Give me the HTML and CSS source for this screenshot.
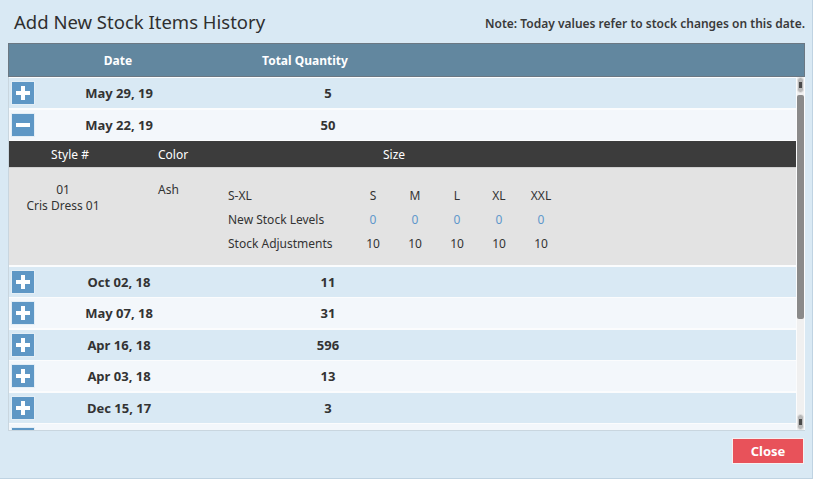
FILE: index.html
```html
<!DOCTYPE html>
<html lang="en">
<head>
  <meta charset="UTF-8">
  <title>Add New Stock Items History</title>
  <link rel="stylesheet" href="styles.css">
</head>
<body>

<div class="dialog">
  <div class="dialog-head">
    <h2>Add New Stock Items History</h2>
    <div class="note">Note: Today values refer to stock changes on this date.</div>
  </div>

  <div class="grid">
    <div class="grid-header">
      <div class="col-toggle"></div>
      <div class="col-date">Date</div>
      <div class="col-qty-head">Total Quantity</div>
    </div>

    <div class="grid-body">
      <div class="rows">
        <div class="row odd">
          <span class="toggle plus"></span>
          <div class="col-date">May 29, 19</div>
          <div class="col-qty">5</div>
        </div>
        <div class="row even">
          <span class="toggle minus"></span>
          <div class="col-date">May 22, 19</div>
          <div class="col-qty">50</div>
        </div>

        <!-- expanded details -->
        <div class="detail">
          <div class="detail-header">
            <div class="dh-style">Style #</div>
            <div class="dh-color">Color</div>
            <div class="dh-size">Size</div>
          </div>
          <div class="detail-body">
            <div class="style-cell">
              <div>01</div>
              <div>Cris Dress 01</div>
            </div>
            <div class="color-cell">Ash</div>
            <table class="size-table">
              <tr>
                <td class="label">S-XL</td>
                <td>S</td><td>M</td><td>L</td><td>XL</td><td>XXL</td>
              </tr>
              <tr>
                <td class="label">New Stock Levels</td>
                <td class="zero">0</td><td class="zero">0</td><td class="zero">0</td><td class="zero">0</td><td class="zero">0</td>
              </tr>
              <tr>
                <td class="label">Stock Adjustments</td>
                <td>10</td><td>10</td><td>10</td><td>10</td><td>10</td>
              </tr>
            </table>
          </div>
        </div>

        <div class="row odd">
          <span class="toggle plus"></span>
          <div class="col-date">Oct 02, 18</div>
          <div class="col-qty">11</div>
        </div>
        <div class="row even">
          <span class="toggle plus"></span>
          <div class="col-date">May 07, 18</div>
          <div class="col-qty">31</div>
        </div>
        <div class="row odd">
          <span class="toggle plus"></span>
          <div class="col-date">Apr 16, 18</div>
          <div class="col-qty">596</div>
        </div>
        <div class="row even">
          <span class="toggle plus"></span>
          <div class="col-date">Apr 03, 18</div>
          <div class="col-qty">13</div>
        </div>
        <div class="row odd">
          <span class="toggle plus"></span>
          <div class="col-date">Dec 15, 17</div>
          <div class="col-qty">3</div>
        </div>
        <div class="row even">
          <span class="toggle plus"></span>
        </div>
      </div>

      <!-- scrollbar -->
      <div class="scrollbar">
        <div class="sb-btn"></div>
        <div class="sb-thumb"></div>
        <div class="sb-btn"></div>
      </div>
    </div>
  </div>

  <div class="dialog-foot">
    <button class="close-btn">Close</button>
  </div>
</div>

</body>
</html>
```

FILE: styles.css
```css
body {
  margin: 0;
  font-family: "Noto Sans", "Open Sans", sans-serif;
  color: #333;
  background: #d9e9f4;
}

.dialog {
  width: 813px;
  height: 479px;
  box-sizing: border-box;
  border-right: 1px solid #bfd3e2;
  border-bottom: 1px solid #bfd3e2;
  background: #d9e9f4;
}

.dialog-head {
  height: 43px;
  display: flex;
  justify-content: space-between;
  align-items: center;
  padding: 0 7px 0 14px;
}

.dialog-head h2 {
  margin: 0;
  font-size: 18.5px;
  font-weight: normal;
  color: #2f2f2f;
}

.note {
  font-size: 12px;
  font-weight: 600;
  margin-top: 4px;
  color: #3a3a3a;
}

.grid {
  margin-left: 8px;
  width: 797px;
}

.grid-header {
  height: 32px;
  display: flex;
  align-items: center;
  background: #62879f;
  border: 1px solid #6b7883;
  color: #fff;
  font-size: 12px;
  font-weight: bold;
}

.col-toggle {
  width: 29px;
}

.col-date {
  width: 160px;
  text-align: center;
}

.col-qty-head {
  width: 214px;
  text-align: center;
}

.col-qty {
  width: 258px;
  text-align: center;
}

.grid-body {
  height: 354px;
  display: flex;
  background: #fbfcfd;
  border-left: 1px solid #c9d6df;
  border-bottom: 1px solid #c9d6df;
  box-sizing: border-box;
}

.rows {
  flex: 1;
  overflow: hidden;
  padding-top: 1px;
}

/* fake vertical scrollbar */
.scrollbar {
  width: 7px;
  margin: 0 1px 0 1px;
  display: flex;
  flex-direction: column;
  background: #f0f0f0;
}

.sb-btn {
  height: 14px;
  background-color: #b9b9b9;
  background-image: linear-gradient(#4a4a4a, #4a4a4a);
  background-size: 3px 6px;
  background-repeat: no-repeat;
  background-position: center;
  border: 1px solid #e2e2e2;
  border-radius: 4px;
}

.sb-thumb {
  height: 224px;
  margin: 2px 0 auto;
  background: #8a8a8a;
  border-radius: 2px;
}

.row {
  height: 30px;
  margin-bottom: 1.5px;
  display: flex;
  align-items: center;
  font-size: 13px;
  font-weight: bold;
  color: #333;
}

.row.odd {
  background: #d9e9f4;
}

.row.even {
  background: #f3f7fb;
}

/* expand / collapse buttons */
.toggle {
  position: relative;
  width: 22px;
  height: 22px;
  margin: 0 4px 0 2px;
  background: #5e97c5;
  border: 1px solid #e3eef6;
  flex-shrink: 0;
}

.toggle::before,
.toggle::after {
  content: "";
  position: absolute;
  background: #fff;
}

.toggle::before {
  left: 4px;
  top: 9px;
  width: 14px;
  height: 4px;
}

.toggle.plus::after {
  left: 9px;
  top: 4px;
  width: 4px;
  height: 14px;
}

.detail {
  margin-bottom: 1.5px;
}

.detail-header {
  height: 26px;
  display: flex;
  align-items: center;
  background: #3c3c3c;
  color: #fff;
  font-size: 12px;
  border-bottom: 1px solid #cfcfcf;
}

.dh-style {
  width: 122px;
  text-align: center;
}

.dh-color {
  width: 225px;
  padding-left: 27px;
}

.detail-body {
  height: 97px;
  box-sizing: border-box;
  display: flex;
  background: #e3e3e3;
  font-size: 12px;
  color: #333;
}

.style-cell {
  width: 108px;
  padding-top: 14px;
  text-align: center;
  line-height: 16px;
}

.color-cell {
  width: 70px;
  padding: 14px 0 0 41px;
  line-height: 16px;
}

.size-table {
  border-collapse: collapse;
  margin-top: 15px;
  align-self: flex-start;
}

.size-table td {
  width: 42px;
  height: 24px;
  padding: 0;
  text-align: center;
}

.size-table td.label {
  width: 124px;
  text-align: left;
}

.size-table td.zero {
  color: #5f97cb;
}

.dialog-foot {
  display: flex;
  justify-content: flex-end;
  padding: 7px 8px 0 0;
}

.close-btn {
  width: 72px;
  height: 26px;
  background: #e8525a;
  color: #fff;
  border: 1px solid #f6f0f0;
  font-family: inherit;
  font-size: 13px;
  font-weight: bold;
  cursor: pointer;
}
```
